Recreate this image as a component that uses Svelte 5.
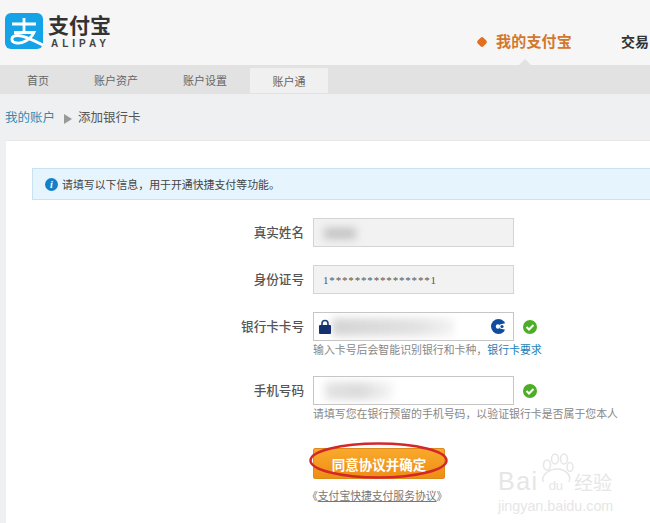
<script lang="ts">
	// Bank card form rows
	const tabs = [
		{ label: "首页", width: 76 },
		{ label: "账户资产", width: 80 },
		{ label: "账户设置", width: 98 },
		{ label: "账户通", width: 78, active: true }
	];
</script>

<div class="page">
	<header class="top">
		<div class="logo">
			<svg class="mark" width="38" height="36" viewBox="0 0 38 36">
				<rect width="38" height="36" rx="6" fill="#14a3e6" />
				<path d="M7 11H31M19 5V19M9 19.5H29C26 26 18 31 11.5 30C5 29 5.5 22.5 12.5 22.5C19 22.5 28 27 38 32" fill="none" stroke="#fff" stroke-width="2.8" />
			</svg>
			<div class="logo-text">
				<span class="cn">支付宝</span>
				<span class="en">ALIPAY</span>
			</div>
		</div>
		<nav class="main-nav">
			<span class="dot"></span>
			<span class="current">我的支付宝</span>
			<span class="other">交易</span>
		</nav>
	</header>

	<div class="subnav">
		{#each tabs as tab}
			<span class="tab" class:active={tab.active} style="width: {tab.width}px">{tab.label}</span>
		{/each}
		<span class="caret"></span>
	</div>

	<div class="crumb">
		<a href="#top">我的账户</a>
		<span class="arrow"></span>
		<span>添加银行卡</span>
	</div>

	<main class="card">
		<div class="notice">
			<span class="info">i</span>
			<span>请填写以下信息，用于开通快捷支付等功能。</span>
		</div>

		<div class="form">
			<div class="row first">
				<span class="label">真实姓名</span>
				<div class="input readonly"><span class="smudge name"></span></div>
			</div>
			<div class="row">
				<span class="label">身份证号</span>
				<div class="input readonly mono">1****************1</div>
			</div>
			<div class="row">
				<span class="label">银行卡卡号</span>
				<div class="input">
					<span class="smudge card-no"></span>
					<svg class="lock" width="12" height="15" viewBox="0 0 12 15">
						<path d="M3 7V4.5a3 3 0 0 1 6 0V7" fill="none" stroke="#1d3a78" stroke-width="1.6" />
						<rect y="6" width="12" height="9" rx="1" fill="#15306e" />
					</svg>
					<svg class="bank" width="15" height="15" viewBox="0 0 15 15">
						<circle cx="7.5" cy="7.5" r="7.5" fill="#0f4c9e" />
						<circle cx="7" cy="7.5" r="2.2" fill="#fff" />
						<path d="M9 5.5L15 4V11L9 9.5Z" fill="#fff" />
						<circle cx="11" cy="7.5" r="1.6" fill="#0f4c9e" />
					</svg>
				</div>
				{@render ok()}
			</div>
			<p class="hint">输入卡号后会智能识别银行和卡种，<a href="#top">银行卡要求</a></p>
			<div class="row phone">
				<span class="label">手机号码</span>
				<div class="input"><span class="smudge mobile"></span></div>
				{@render ok()}
			</div>
			<p class="hint">请填写您在银行预留的手机号码，以验证银行卡是否属于您本人</p>

			<div class="submit">
				<button type="button">同意协议并确定</button>
				<svg class="ring" width="142" height="38" viewBox="0 0 142 38">
					<ellipse cx="70.5" cy="18.5" rx="68" ry="17" fill="none" stroke="#d3272a" stroke-width="2.5" />
				</svg>
			</div>
			<p class="agreement">《<a href="#top">支付宝快捷支付服务协议</a>》</p>
		</div>

		<div class="watermark">
			<svg class="paw" width="36" height="34" viewBox="0 0 36 34">
				<g fill="none" stroke="#e6e6e6" stroke-width="1.5">
					<ellipse cx="9" cy="13" rx="3.5" ry="5" />
					<ellipse cx="17" cy="7" rx="3.5" ry="5" />
					<ellipse cx="26" cy="7" rx="3.5" ry="5" />
					<ellipse cx="32" cy="15" rx="3" ry="4.5" />
					<path d="M5 30C3 22 12 17 19 17C27 17 34 23 31 30" />
				</g>
			</svg>
			<div class="wm-top"><span class="wm-bai">Bai</span><span class="wm-du">du</span><span class="wm-jy">经验</span></div>
			<div class="wm-url">jingyan.baidu.com</div>
		</div>
	</main>
</div>

{#snippet ok()}
	<svg class="ok" width="14" height="14" viewBox="0 0 14 14">
		<circle cx="7" cy="7" r="7" fill="#4cae25" />
		<path d="M3.5 7L6 9.5L10.5 5" fill="none" stroke="#fff" stroke-width="2" />
	</svg>
{/snippet}

<style>
	:global(body) {
		margin: 0;
		overflow: hidden;
	}

	.page {
		width: 650px;
		height: 523px;
		overflow: hidden;
		background: #eff0f2;
		font-family: "Liberation Sans", "Noto Sans CJK SC", sans-serif;
		color: #555;
	}

	.top {
		height: 65px;
		background: #f6f6f6;
		display: flex;
		justify-content: space-between;
		white-space: nowrap;
	}

	.logo {
		display: flex;
		gap: 5px;
		padding: 13px 0 0 5px;
	}

	.logo-text {
		display: flex;
		flex-direction: column;
		color: #333;
	}

	.cn {
		font-size: 21px;
		font-weight: 700;
		line-height: 24px;
		margin-top: 1px;
	}

	.en {
		font-size: 10px;
		font-weight: 700;
		line-height: 11px;
		letter-spacing: 4px;
		padding-left: 3px;
		color: #444;
	}

	.main-nav {
		width: 172px;
		display: flex;
		align-items: flex-start;
		padding-top: 32px;
		font-size: 15px;
		line-height: 20px;
		flex-shrink: 0;
	}

	.dot {
		width: 8px;
		height: 8px;
		margin: 6px 10px 0 0;
		background: #e36e1d;
		transform: rotate(45deg);
		border-radius: 2px;
		flex-shrink: 0;
	}

	.current {
		color: #d4762c;
		font-weight: 700;
		letter-spacing: 0.2px;
	}

	.other {
		margin-left: 49px;
		color: #333;
		font-size: 14px;
		font-weight: 700;
	}

	.subnav {
		position: relative;
		height: 29px;
		background: #e2e2e2;
		display: flex;
		align-items: stretch;
	}

	.tab {
		display: flex;
		align-items: center;
		justify-content: center;
		font-size: 11px;
		color: #666;
	}

	.tab.active {
		height: 25px;
		margin: 3px 0 0 -4px;
		background: #f0f0f0;
	}

	.caret {
		position: absolute;
		left: 519px;
		top: -6px;
		border: 6px solid transparent;
		border-top: 0;
		border-bottom-color: #e2e2e2;
	}

	.crumb {
		height: 46px;
		box-sizing: border-box;
		padding: 16px 0 0 5px;
		display: flex;
		align-items: flex-start;
		font-size: 12.5px;
		line-height: 17px;
		color: #555;
	}

	.crumb a {
		color: #2c8cb4;
		text-decoration: none;
	}

	.arrow {
		margin: 4px 6px 0 9px;
		border: 5px solid transparent;
		border-left: 8px solid #999;
		border-right: 0;
	}

	.card {
		position: relative;
		margin-left: 6px;
		height: 383px;
		background: #fff;
		padding-top: 27px;
		box-sizing: border-box;
		border-top: 1px solid #e8e8e8;
	}

	.notice {
		margin-left: 26px;
		height: 32px;
		box-sizing: border-box;
		background: #e6f4fd;
		border: 1px solid #c9e2f2;
		border-right: 0;
		display: flex;
		align-items: center;
		gap: 4px;
		padding-left: 12px;
		font-size: 10.9px;
		color: #444;
	}

	.info {
		width: 13px;
		height: 13px;
		border-radius: 50%;
		background: #1580c8;
		color: #fff;
		font: italic 700 10px/13px "Liberation Serif", serif;
		text-align: center;
	}

	.form {
		padding: 18px 0 0 0;
	}

	.row {
		display: flex;
		align-items: center;
		height: 29px;
		margin-bottom: 18px;
	}

	.row:has(+ .hint) {
		margin-bottom: 0;
	}

	.label {
		width: 307px;
		padding: 0 9px 2px 0;
		box-sizing: border-box;
		text-align: right;
		font-size: 12.6px;
		font-weight: 500;
		color: #555;
	}

	.input {
		position: relative;
		width: 201px;
		height: 29px;
		box-sizing: border-box;
		border: 1px solid #c6c6c6;
		background: #fff;
		overflow: hidden;
	}

	.input.readonly {
		background: #f2f2f2;
		border-color: #d4d4d4;
	}

	.mono {
		padding-left: 9px;
		font: 11px/28px "Liberation Serif", serif;
		letter-spacing: 0.83px;
		color: #555;
	}

	.smudge {
		position: absolute;
		filter: blur(4px);
	}

	.name {
		left: 10px;
		top: 9px;
		width: 32px;
		height: 11px;
		background: #c2c2c2;
	}

	.card-no {
		left: 18px;
		top: 5px;
		width: 122px;
		height: 18px;
		background: linear-gradient(90deg, #d4d4d4, #e2e2e2 70%, #f4f4f4);
	}

	.mobile {
		left: 11px;
		top: 5px;
		width: 68px;
		height: 18px;
		background: linear-gradient(90deg, #e4e4e4, #dadada 50%, #f6f6f6);
	}

	.lock {
		position: absolute;
		left: 5px;
		top: 6px;
	}

	.bank {
		position: absolute;
		right: 7px;
		top: 6px;
	}

	.ok {
		margin-left: 9px;
	}

	.hint {
		margin: 1px 0 17px 307px;
		font-size: 10.9px;
		line-height: 17px;
		height: 17px;
		color: #888;
		white-space: nowrap;
	}

	.hint a {
		color: #1c7fb5;
		text-decoration: none;
	}

	.submit {
		position: relative;
		margin: 25px 0 0 307px;
		width: 132px;
		height: 31px;
	}

	button {
		display: block;
		width: 132px;
		height: 31px;
		padding: 0;
		border: 1px solid #dc8a1c;
		border-radius: 2px;
		background: linear-gradient(#f9a92c, #ee8e14);
		color: #fff;
		font: 700 13.5px "Liberation Sans", "Noto Sans CJK SC", sans-serif;
	}

	.ring {
		position: absolute;
		left: -5px;
		top: -6px;
	}

	.agreement {
		margin: 9px 0 0 301px;
		font-size: 10.8px;
		line-height: 17px;
		color: #777;
		white-space: nowrap;
	}

	.agreement a {
		color: #777;
	}

	.watermark {
		position: absolute;
		left: 492px;
		top: 310px;
		width: 120px;
		color: #e6e6e6;
		white-space: nowrap;
	}

	.paw {
		position: absolute;
		left: 40px;
		top: 1px;
	}

	.wm-top {
		position: absolute;
		top: 17px;
		left: 0;
		display: flex;
		align-items: baseline;
		font-size: 25px;
		line-height: 26px;
	}

	.wm-bai {
		letter-spacing: 1.5px;
	}

	.wm-du {
		margin-left: 10px;
		font-size: 13px;
	}

	.wm-jy {
		margin-left: 11px;
		font-size: 19px;
	}

	.wm-url {
		position: absolute;
		top: 48px;
		left: 0;
		font-size: 14.3px;
		line-height: 15px;
	}
</style>
